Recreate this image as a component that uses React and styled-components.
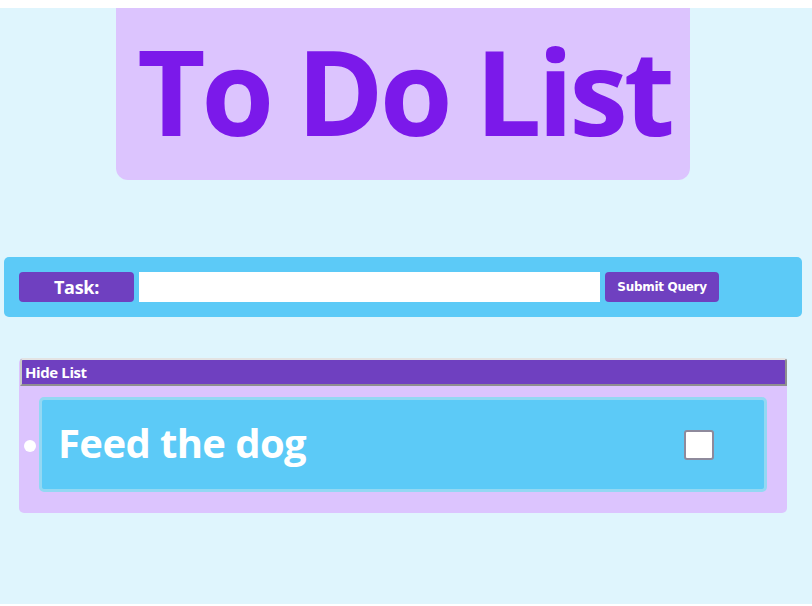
import React, { useState } from 'react';
import styled, { createGlobalStyle } from 'styled-components';

const colors = {
    page: '#dff5fd',
    lilac: '#dcc4fe',
    violet: '#7b19ea',
    purple: '#6f40c0',
    sky: '#5ccaf7',
    skyEdge: '#93d8f3',
};

const GlobalStyle = createGlobalStyle`
    body {
        margin: 0;
        padding-top: 8px;
        background: #ffffff;
        font-family: "Open Sans", "Noto Sans", sans-serif;
    }
`;

const Page = styled.main`
    background: ${colors.page};
    height: 596px;
    display: flex;
    flex-direction: column;
`;

const Header = styled.header`
    width: 574px;
    height: 172px;
    margin-left: 116px;
    background: ${colors.lilac};
    border-radius: 0 0 12px 12px;
    display: flex;
    align-items: center;
    justify-content: center;
`;

const Title = styled.h1`
    margin: 0 0 6px 2px;
    color: ${colors.violet};
    font-size: 118px;
    font-weight: 700;
    letter-spacing: -4.2px;
    line-height: 1;
`;

const TaskForm = styled.form`
    margin: 77px 10px 0 4px;
    height: 60px;
    box-sizing: border-box;
    padding: 15px;
    background: ${colors.sky};
    border-radius: 5px;
    display: flex;
    align-items: center;
    gap: 5px;
`;

const Label = styled.label`
    width: 115px;
    height: 30px;
    background: ${colors.purple};
    border-radius: 4px;
    color: #fff;
    font-size: 18px;
    font-weight: 700;
    letter-spacing: -0.3px;
    display: flex;
    align-items: center;
    justify-content: center;
`;

const TaskInput = styled.input`
    width: 461px;
    height: 30px;
    box-sizing: border-box;
    border: none;
    background: #fff;
    outline: none;
`;

const SubmitButton = styled.button`
    width: 114px;
    height: 30px;
    border: none;
    border-radius: 4px;
    background: ${colors.purple};
    color: #fff;
    font-family: "DejaVu Sans", sans-serif;
    font-size: 12px;
    font-weight: 700;
    letter-spacing: -0.3px;
    padding: 0;
`;

const ListPanel = styled.section`
    margin: 41px 0 0 19px;
    width: 768px;
    height: 155px;
    box-sizing: border-box;
    background: ${colors.lilac};
    border-radius: 5px;
    display: flex;
    flex-direction: column;
`;

const ToggleButton = styled.button`
    margin-left: 1px;
    height: 28px;
    box-sizing: border-box;
    background: ${colors.purple};
    color: #fff;
    border: 2px solid;
    border-color: #e3e3e3 #8f8f8f #8f8f8f #c8c8c8;
    border-radius: 3px 3px 0 0;
    text-align: left;
    padding: 0 0 0 3px;
    font-family: "Open Sans", "Noto Sans", sans-serif;
    font-size: 15px;
    font-weight: 700;
    letter-spacing: -0.4px;
`;

const Items = styled.ul`
    list-style: none;
    margin: 11px 0 0 0;
    padding: 0 0 0 5px;
`;

const Item = styled.li`
    display: flex;
    align-items: center;
    gap: 3px;
`;

const Bullet = styled.span`
    width: 12px;
    height: 12px;
    margin-top: 3px;
    border-radius: 50%;
    background: #fff;
    flex: none;
`;

const ItemCard = styled.div`
    width: 728px;
    height: 95px;
    box-sizing: border-box;
    background: ${colors.sky};
    border: 3px solid ${colors.skyEdge};
    border-radius: 5px;
    display: flex;
    align-items: center;
    justify-content: space-between;
    padding: 0 50px 0 16px;
`;

const ItemText = styled.span`
    color: #fff;
    font-size: 40px;
    font-weight: 700;
    letter-spacing: -0.6px;
    margin-bottom: 4px;
`;

const Check = styled.span`
    width: 30px;
    height: 30px;
    box-sizing: border-box;
    background: ${({ checked }) => (checked ? colors.purple : '#fff')};
    border: 2px solid #8e8a9c;
    border-radius: 3px;
    cursor: pointer;
`;

export default function App() {
    const [tasks, setTasks] = useState([{ text: 'Feed the dog', done: false }]);
    const [showList, setShowList] = useState(true);

    const toggleTask = (i) => {
        setTasks(tasks.map((t, j) => (j === i ? { ...t, done: !t.done } : t)));
    };

    return (
        <>
            <GlobalStyle />
            <Page>
                <Header>
                    <Title>To Do List</Title>
                </Header>
                <TaskForm onSubmit={(e) => e.preventDefault()}>
                    <Label htmlFor="task">Task:</Label>
                    <TaskInput id="task" type="text" />
                    <SubmitButton type="submit">Submit Query</SubmitButton>
                </TaskForm>
                <ListPanel>
                    <ToggleButton type="button" onClick={() => setShowList(!showList)}>
                        {showList ? 'Hide List' : 'Show List'}
                    </ToggleButton>
                    {showList && (
                        <Items>
                            {tasks.map((t, i) => (
                                <Item key={i}>
                                    <Bullet />
                                    <ItemCard>
                                        <ItemText>{t.text}</ItemText>
                                        <Check checked={t.done} onClick={() => toggleTask(i)} />
                                    </ItemCard>
                                </Item>
                            ))}
                        </Items>
                    )}
                </ListPanel>
            </Page>
        </>
    );
}
